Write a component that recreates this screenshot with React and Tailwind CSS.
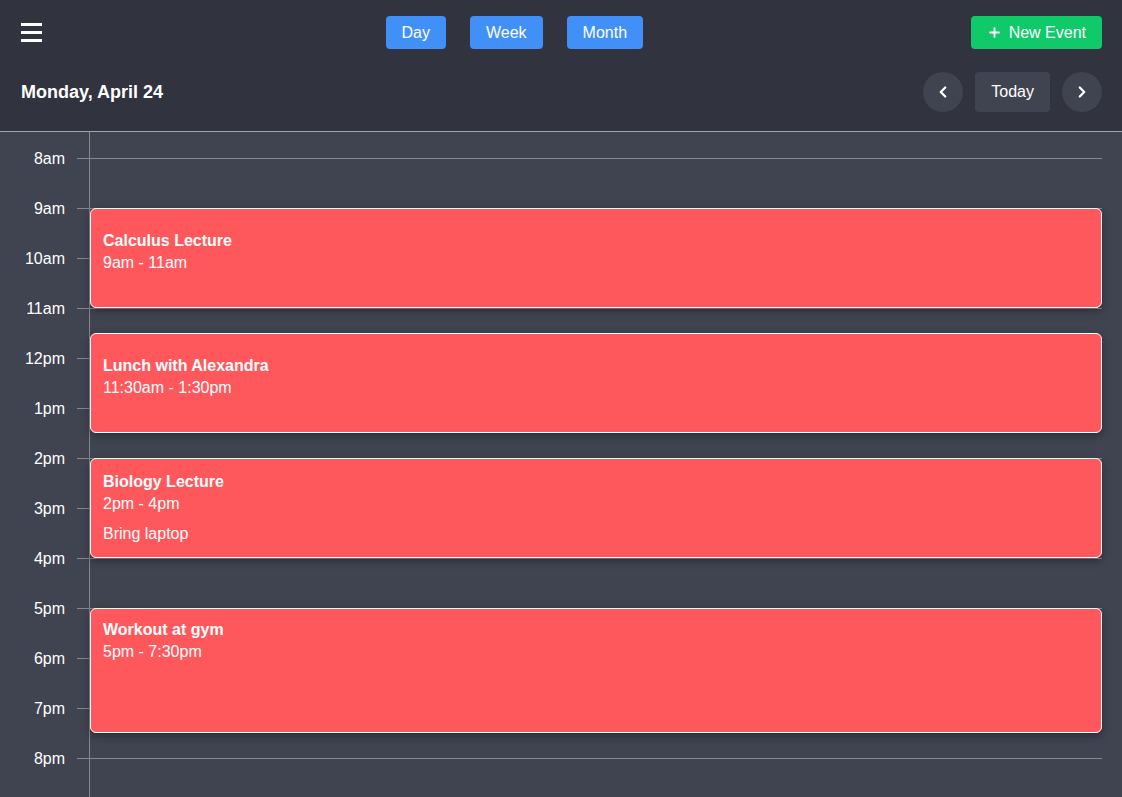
import React from "react";
import { ChevronLeft, ChevronRight, Plus } from "lucide-react";

const hours = ["8am", "9am", "10am", "11am", "12pm", "1pm", "2pm", "3pm", "4pm", "5pm", "6pm", "7pm", "8pm"];

// start offset and length in hours from 8am
const events = [
  { title: "Calculus Lecture", time: "9am - 11am", start: 1, length: 2, pad: "pt-[21px]" },
  { title: "Lunch with Alexandra", time: "11:30am - 1:30pm", start: 3.5, length: 2, pad: "pt-[21px]" },
  { title: "Biology Lecture", time: "2pm - 4pm", note: "Bring laptop", start: 6, length: 2, pad: "pt-[12px]" },
  { title: "Workout at gym", time: "5pm - 7:30pm", start: 9, length: 2.5, pad: "pt-[10px]" },
];

const ROW = 50;

const App = () => {
  return (
    <div className="h-screen overflow-hidden flex flex-col bg-[#3f4450] text-white font-['Liberation_Sans',Arial,sans-serif]">
      <header className="bg-[#31333e] border-b border-[#a2a5ac] px-5 pt-4 pb-[19px]">
        <div className="flex items-center justify-between">
          <button className="w-[38px] h-[33px] flex flex-col justify-center gap-[5px] pl-px">
            <span className="block w-[21px] h-[3px] bg-white" />
            <span className="block w-[21px] h-[3px] bg-white" />
            <span className="block w-[21px] h-[3px] bg-white" />
          </button>
          <div className="flex gap-6">
            {["Day", "Week", "Month"].map((v) => (
              <button key={v} className="h-[33px] px-4 rounded bg-[#4190f7] text-white text-base">
                {v}
              </button>
            ))}
          </div>
          <button className="h-[33px] pl-4 pr-4 rounded bg-[#10ca6a] text-white text-base flex items-center gap-[7px]">
            <Plus size={15} strokeWidth={3} />
            New Event
          </button>
        </div>
        <div className="flex items-center justify-between mt-[23px]">
          <h1 className="text-lg font-bold pl-px">Monday, April 24</h1>
          <div className="flex items-center gap-3">
            <button className="w-10 h-10 rounded-full bg-[#3f4450] flex items-center justify-center">
              <ChevronLeft size={18} strokeWidth={3} />
            </button>
            <button className="h-10 px-4 rounded bg-[#3f4450] text-base">Today</button>
            <button className="w-10 h-10 rounded-full bg-[#3f4450] flex items-center justify-center">
              <ChevronRight size={18} strokeWidth={3} />
            </button>
          </div>
        </div>
      </header>

      <main className="flex-1 flex overflow-hidden">
        <div className="w-[89px] shrink-0 pt-[2px]">
          {hours.map((h) => (
            <div key={h} className="h-[50px] flex items-center">
              <span className="w-[65px] text-right text-base text-white">{h}</span>
              <span className="ml-3 w-3 h-px bg-[#85888e] -translate-y-px" />
            </div>
          ))}
        </div>
        <div className="flex-1 mr-5 border-l border-[#85888e] relative pt-px">
          {hours.map((h) => (
            <div key={h} className="h-[50px] flex items-center">
              <span className="w-full h-px bg-[#85888e]" />
            </div>
          ))}
          {events.map((e) => (
            <div
              key={e.title}
              className={`absolute left-0 right-0 rounded-md border border-white bg-[#ff585c] shadow-[0_3px_8px_rgba(0,0,0,0.35)] px-3 ${e.pad}`}
              style={{ top: 26 + e.start * ROW, height: e.length * ROW }}
            >
              <div className="text-base leading-[22px] font-bold">{e.title}</div>
              <div className="text-base leading-[22px]">{e.time}</div>
              {e.note && <div className="text-base leading-[22px] mt-2">{e.note}</div>}
            </div>
          ))}
        </div>
      </main>
    </div>
  );
};

export default App;
